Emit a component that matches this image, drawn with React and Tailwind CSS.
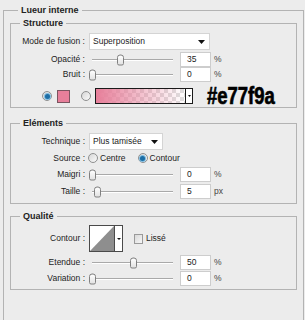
import React from "react";

const Radio = ({ checked }) => (
  <span className="flex h-[10px] w-[10px] shrink-0 items-center justify-center rounded-full border border-[#8f9090] bg-linear-to-br from-[#d6d6d6] to-[#fbfbfb]">
    {checked && (
      <span className="h-[5px] w-[5px] rounded-full bg-[#1d6ea5] shadow-[0_0_0_1px_#7fbbe0]" />
    )}
  </span>
);

const Arrow = () => (
  <svg width="7" height="4" viewBox="0 0 7 4" className="shrink-0">
    <path d="M0 0h7L3.5 4z" fill="#111" />
  </svg>
);

const Slider = ({ thumb }) => (
  <div className="relative h-full w-[84px]">
    <div className="absolute left-[3px] right-0 top-1/2 h-[2px] -translate-y-1/2 border-t border-b border-t-[#a9a9a9] border-b-white" />
    <div
      className="absolute top-1/2 h-[11px] w-[7px] -translate-y-1/2 rounded-t-[3px] rounded-b-[2px] border border-[#808080] bg-linear-to-b from-white to-[#e2e2e2]"
      style={{ left: thumb - 3 }}
    />
  </div>
);

const Field = ({ value }) => (
  <div className="flex h-[15px] w-[31px] items-center border border-[#cdcdcd] bg-white pl-[6px]">
    {value}
  </div>
);

const SliderRow = ({ label, thumb, value, unit, className = "" }) => (
  <div className={"flex h-[15px] items-center " + className}>
    <span className="w-[74px] text-right">{label}</span>
    <div className="ml-[4px] h-full">
      <Slider thumb={thumb} />
    </div>
    <div className="ml-[7px]">
      <Field value={value} />
    </div>
    <span className="ml-[3px] text-[#444]">{unit}</span>
  </div>
);

const Group = ({ title, className = "", children }) => (
  <fieldset className={"border border-[#b3b3b3] " + className}>
    <legend className="ml-[9px] px-[3px] text-[9px] font-bold leading-[12px] text-[#222]">
      {title}
    </legend>
    {children}
  </fieldset>
);

export default function App() {
  return (
    <div className="h-[320px] w-[305px] overflow-hidden bg-[#ececec] pl-[3px] pr-[1px] pt-[4px] font-['Liberation_Sans',Arial,sans-serif] text-[8.5px] leading-none text-[#1c1c1c]">
      <fieldset className="border border-[#b3b3b3] px-[6px] pb-[60px]">
        <legend className="ml-[8px] px-[3px] text-[9px] font-bold leading-[12px] text-[#222]">
          Lueur interne
        </legend>

        <Group title="Structure" className="mt-[1px] pb-[3px] pt-[4px]">
          <div className="flex h-[17px] items-center">
            <span className="w-[74px] text-right">Mode de fusion :</span>
            <div className="ml-[4px] flex h-full w-[121px] items-center justify-between border border-[#d4d4d4] bg-white pl-[3px] pr-[4px]">
              <span>Superposition</span>
              <Arrow />
            </div>
          </div>
          <SliderRow label="Opacité :" thumb={31} value="35" unit="%" className="mt-[2px]" />
          <SliderRow label="Bruit :" thumb={3} value="0" unit="%" />
          <div className="mt-[6px] flex h-[16px] items-center pl-[31px]">
            <Radio checked />
            <div className="ml-[5px] h-[13px] w-[13px] border border-[#7a5560] bg-[#e77f9a]" />
            <div className="ml-[11px]">
              <Radio />
            </div>
            <div className="ml-[4px] flex h-[16px] w-[98px] border border-[#1a1a1a]">
              <div className="relative flex-1 bg-[conic-gradient(#dedede_25%,#ffffff_0_50%,#dedede_0_75%,#ffffff_0)] bg-[length:8px_8px]">
                <div className="h-full w-full bg-linear-to-r from-[#e77f9a] to-transparent" />
              </div>
              <div className="flex w-[7px] items-center justify-center border-l border-[#1a1a1a] bg-white">
                <svg width="3" height="2" viewBox="0 0 3 2">
                  <path d="M0 0h3L1.5 2z" fill="#111" />
                </svg>
              </div>
            </div>
            <span className="ml-[14px] origin-left scale-x-[0.77] text-[24px] font-bold leading-none text-black [-webkit-text-stroke:0.7px_black]">
              #e77f9a
            </span>
          </div>
        </Group>

        <Group title="Eléments" className="mt-[9px] pb-[4px] pt-[4px]">
          <div className="flex h-[17px] items-center">
            <span className="w-[74px] text-right">Technique :</span>
            <div className="ml-[4px] flex h-full w-[74px] items-center justify-between border border-[#d4d4d4] bg-white pl-[3px] pr-[4px]">
              <span>Plus tamisée</span>
              <Arrow />
            </div>
          </div>
          <div className="mt-[1px] flex h-[14px] items-center">
            <span className="w-[74px] text-right">Source :</span>
            <div className="ml-[3px]">
              <Radio />
            </div>
            <span className="ml-[2px]">Centre</span>
            <div className="ml-[12px]">
              <Radio checked />
            </div>
            <span className="ml-[2px]">Contour</span>
          </div>
          <SliderRow label="Maigri :" thumb={3} value="0" unit="%" className="mt-[2px]" />
          <SliderRow label="Taille :" thumb={8} value="5" unit="px" className="mt-[2px]" />
        </Group>

        <Group title="Qualité" className="mt-[6px] pb-[3px] pt-[3px]">
          <div className="flex h-[27px] items-center">
            <span className="w-[74px] text-right">Contour :</span>
            <div className="ml-[4px] flex h-full w-[34px] border border-[#4a4a4a] bg-white">
              <svg width="24" height="25" viewBox="0 0 24 25" className="block">
                <path d="M0 25L24 0V25z" fill="#8e8e8e" />
              </svg>
              <div className="flex flex-1 items-center justify-center border-l border-[#4a4a4a]">
                <svg width="4" height="2" viewBox="0 0 4 2">
                  <path d="M0 0h4L2 2z" fill="#111" />
                </svg>
              </div>
            </div>
            <div className="ml-[11px] h-[10px] w-[9px] border border-[#9a9a9a] bg-linear-to-br from-[#d9d9d9] to-[#f7f7f7]" />
            <span className="ml-[3px]">Lissé</span>
          </div>
          <SliderRow label="Etendue :" thumb={44} value="50" unit="%" className="mt-[3px]" />
          <SliderRow label="Variation :" thumb={3} value="0" unit="%" className="mt-[1px]" />
        </Group>
      </fieldset>
    </div>
  );
}
